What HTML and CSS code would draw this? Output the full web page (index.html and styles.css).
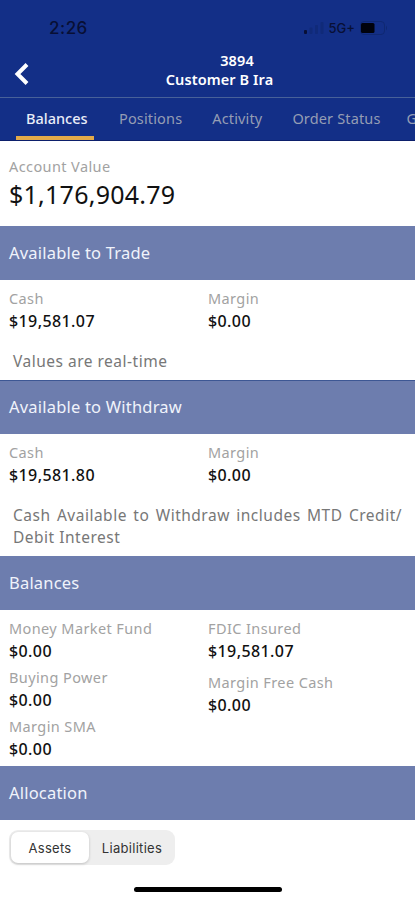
FILE: index.html
```html
<!DOCTYPE html>
<html lang="en">
  <head>
    <meta charset="UTF-8" />
    <meta name="viewport" content="width=device-width, initial-scale=1.0" />
    <title>Account Balances</title>
    <link rel="stylesheet" href="styles.css">
  </head>
  <body>
    <header class="header">
      <div class="status-bar">
        <span class="time">2:26</span>
        <div class="status-icons">
          <svg class="signal" width="20" height="12" viewBox="0 0 20 12">
            <rect x="0" y="8" width="3" height="4" rx="1" fill="#080f35" />
            <rect x="5.5" y="5.5" width="3" height="6.5" rx="1" fill="#102a79" />
            <rect x="11" y="3" width="3" height="9" rx="1" fill="#102a79" />
            <rect x="16.5" y="0" width="3" height="12" rx="1" fill="#102a79" />
          </svg>
          <span class="network">5G+</span>
          <svg class="battery" width="28" height="14" viewBox="0 0 28 14">
            <rect x="0.5" y="0.5" width="24" height="13" rx="3.5" fill="none" stroke="#0f2872" />
            <rect x="1" y="2" width="13.5" height="10" rx="1.5" fill="#00020c" />
            <path d="M26 4.5 Q28 7 26 9.5 Z" fill="#0f2872" />
          </svg>
        </div>
      </div>
      <div class="title-bar">
        <svg class="back" width="17" height="24" viewBox="0 0 17 24">
          <path d="M14 2.5 L4.5 12 L14 21.5" fill="none" stroke="#fff" stroke-width="4" />
        </svg>
        <div class="title">
          <div class="account-number">3894</div>
          <div class="account-name">Customer B Ira</div>
        </div>
      </div>
      <nav class="tabs">
        <a class="tab active">Balances</a>
        <a class="tab">Positions</a>
        <a class="tab">Activity</a>
        <a class="tab">Order Status</a>
        <a class="tab">G</a>
      </nav>
    </header>

    <main>
      <div class="account">
        <div class="label">Account Value</div>
        <div class="total">$1,176,904.79</div>
      </div>

      <h2 class="section-title">Available to Trade</h2>
      <div class="section trade">
        <div class="columns">
          <div class="item">
            <div class="label">Cash</div>
            <div class="value">$19,581.07</div>
          </div>
          <div class="item">
            <div class="label">Margin</div>
            <div class="value">$0.00</div>
          </div>
        </div>
        <p class="note">Values are real-time</p>
      </div>

      <h2 class="section-title ruled">Available to Withdraw</h2>
      <div class="section withdraw">
        <div class="columns">
          <div class="item">
            <div class="label">Cash</div>
            <div class="value">$19,581.80</div>
          </div>
          <div class="item">
            <div class="label">Margin</div>
            <div class="value">$0.00</div>
          </div>
        </div>
        <p class="note">Cash Available to Withdraw includes MTD Credit/<wbr>Debit Interest</p>
      </div>

      <h2 class="section-title">Balances</h2>
      <div class="section balances">
        <div class="columns">
          <div class="column">
            <div class="item">
              <div class="label">Money Market Fund</div>
              <div class="value">$0.00</div>
            </div>
            <div class="item">
              <div class="label">Buying Power</div>
              <div class="value">$0.00</div>
            </div>
            <div class="item">
              <div class="label">Margin SMA</div>
              <div class="value">$0.00</div>
            </div>
          </div>
          <div class="column wide">
            <div class="item">
              <div class="label">FDIC Insured</div>
              <div class="value">$19,581.07</div>
            </div>
            <div class="item">
              <div class="label">Margin Free Cash</div>
              <div class="value">$0.00</div>
            </div>
          </div>
        </div>
      </div>

      <h2 class="section-title">Allocation</h2>
      <div class="switch">
        <button class="option selected">Assets</button>
        <button class="option">Liabilities</button>
      </div>
    </main>

    <div class="home-bar"></div>
  </body>
</html>
```
FILE: styles.css
```css
* {
  box-sizing: border-box;
}

body {
  margin: 0;
  height: 900px;
  overflow: hidden;
  display: flex;
  flex-direction: column;
  background-color: #fff;
  font-family: "Noto Sans", sans-serif;
  color: #111;
}

/* Header */
.header {
  height: 141px;
  background-color: #132f87;
  border-bottom: 1px solid #0c1f6b;
}

.status-bar {
  height: 50px;
  padding: 6px 27px 0 49px;
  display: flex;
  justify-content: space-between;
  align-items: center;
  color: #080f35;
}

.time {
  font-family: Inter, sans-serif;
  font-size: 17px;
  font-weight: 500;
  letter-spacing: 0.5px;
}

.status-icons {
  display: flex;
  align-items: center;
}

.network {
  margin: 0 5px 0 5px;
  font-family: Inter, sans-serif;
  font-size: 13px;
  font-weight: 500;
  line-height: 14px;
}

.title-bar {
  height: 48px;
  padding: 0 0 0 13px;
  display: flex;
  border-bottom: 1px solid #486199;
}

.back {
  margin-top: 12px;
}

.title {
  flex: 1;
  padding-top: 1px;
  text-align: center;
  color: #fff;
  font-size: 14.5px;
  font-weight: 600;
  line-height: 19px;
  letter-spacing: 0.1px;
}

.account-number {
  padding-left: 29px;
}

.account-name {
  padding-right: 6px;
}

.tabs {
  height: 42px;
  padding-left: 16px;
  display: flex;
  overflow: hidden;
}

.tab {
  flex: none;
  padding: 0 10px;
  margin-right: 10px;
  border-bottom: 4px solid transparent;
  color: #959db4;
  font-size: 14.5px;
  line-height: 41px;
  letter-spacing: 0.15px;
}

.tab.active {
  width: 78px;
  margin-right: 15px;
  border-color: #e3aa49;
  color: #e9edf8;
  font-weight: 500;
  letter-spacing: 0;
}

.tab:last-child {
  margin: 0;
  padding: 0 0 0 6px;
}

/* Account values */
.account {
  height: 85px;
  padding: 14px 9px 0;
}

.label {
  margin-bottom: 1px;
  color: #a2a2a2;
  font-size: 14.5px;
  line-height: 22px;
  letter-spacing: 0.4px;
}

.value {
  font-size: 16px;
  font-weight: 500;
  line-height: 22px;
  letter-spacing: 0.4px;
}

.total {
  font-size: 25px;
  line-height: 32px;
  letter-spacing: 0.25px;
}

.section-title {
  margin: 0;
  height: 54px;
  padding-left: 9px;
  background-color: #6d7dae;
  color: #f0f3fb;
  font-size: 16.5px;
  font-weight: 400;
  line-height: 54px;
  letter-spacing: 0.2px;
}

.section-title.ruled {
  border-top: 1px solid #3d5794;
  line-height: 52px;
}

.section {
  padding: 7px 9px 0;
}

.trade {
  height: 100px;
}

.withdraw {
  height: 122px;
}

.balances {
  height: 156px;
}

.columns {
  display: grid;
  grid-template-columns: 199px 1fr;
}

.column {
  display: flex;
  flex-direction: column;
  gap: 4px;
}

.column.wide {
  gap: 9px;
}

.note {
  margin: 18px 4px 0;
  color: #777;
  font-size: 15.5px;
  line-height: 22px;
  letter-spacing: 0.5px;
  text-align: justify;
}

/* Assets and liabilities switch */
.switch {
  width: 166px;
  height: 35px;
  margin: 10px 0 0 9px;
  padding: 2px;
  display: flex;
  border-radius: 9px;
  background-color: #eee;
}

.option {
  flex: 1;
  padding: 0 0 0 2px;
  border: 0;
  border-radius: 7px;
  background: none;
  color: #333;
  font-family: Inter, sans-serif;
  font-size: 13px;
  letter-spacing: 0.3px;
}

.option.selected {
  flex: none;
  width: 78px;
  padding: 0;
  background-color: #fff;
  box-shadow: 0 1px 3px rgba(0, 0, 0, 0.2);
}

.home-bar {
  width: 148px;
  height: 5px;
  margin: auto auto 8px;
  border-radius: 3px;
  background-color: #000;
}
```
